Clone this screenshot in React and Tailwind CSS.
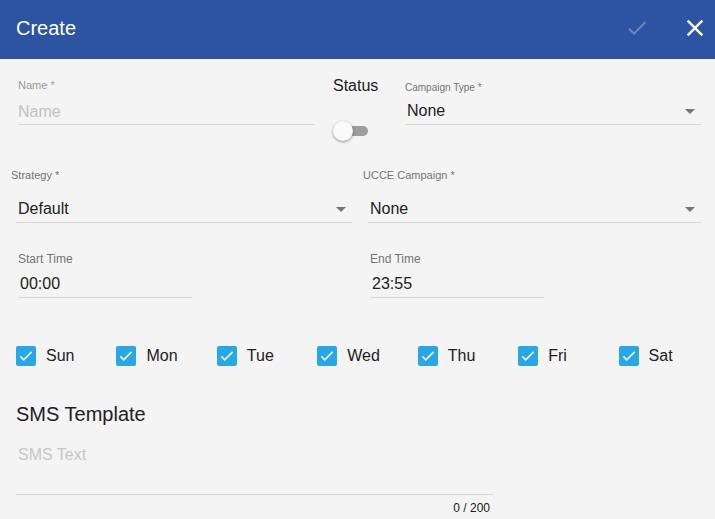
import React from 'react';

const days = ['Sun', 'Mon', 'Tue', 'Wed', 'Thu', 'Fri', 'Sat'];

function Arrow() {
  return <span className="w-0 h-0 border-l-[5px] border-r-[5px] border-t-[5px] border-l-transparent border-r-transparent border-t-[#757575]" />;
}

function SelectField({ label, value, className, labelClass, inputClass }) {
  return (
    <div className={`flex flex-col ${className}`}>
      <div className={`text-[#757575] leading-[13px] ${labelClass}`}>{label}</div>
      <div className={`flex items-center justify-between border-b border-[#d6d6d6] pl-[2px] pr-[6px] ${inputClass}`}>
        <span className="text-[16px] leading-[20px] text-[#212121]">{value}</span>
        <Arrow />
      </div>
    </div>
  );
}

function Day({ name }) {
  return (
    <div className="flex items-center">
      <span className="w-[20px] h-[20px] rounded-[2px] bg-[#27a7e8] flex items-center justify-center">
        <svg width="18" height="18" viewBox="0 0 24 24" fill="none" stroke="#f4f9fd" strokeWidth="2.2">
          <path d="M4.5 12.5l4.5 4.5L19.5 6.5" />
        </svg>
      </span>
      <span className="ml-[10px] text-[16px] leading-[20px] text-[#212121]">{name}</span>
    </div>
  );
}

export default function App() {
  return (
    <div className="w-[715px] h-[519px] overflow-hidden bg-[#f4f4f4]" style={{ fontFamily: '"Liberation Sans", Arial, sans-serif' }}>
      <div className="h-[59px] bg-[#2d53a3] flex items-center pl-[16px] pr-[6px] pb-[4px]">
        <span className="text-white text-[20px] leading-[24px] flex-1">Create</span>
        <svg width="24" height="24" viewBox="0 0 24 24" fill="#6f84bb" className="mr-[32px]">
          <path d="M9 16.17L4.83 12l-1.42 1.41L9 19 21 7l-1.41-1.41z" />
        </svg>
        <svg width="28" height="28" viewBox="0 0 24 24" fill="white">
          <path d="M19 6.41L17.59 5 12 10.59 6.41 5 5 6.41 10.59 12 5 17.59 6.41 19 12 13.41 17.59 19 19 17.59 13.41 12z" />
        </svg>
      </div>

      <div className="flex pl-[18px] pt-[20px]">
        <div className="flex flex-col w-[297px]">
          <div className="text-[11px] leading-[13px] text-[#999]">Name *</div>
          <div className="border-b border-[#d6d6d6] pt-[10px] pb-[2px] text-[16px] leading-[20px] text-[#c2c2c2]">Name</div>
        </div>
        <div className="flex flex-col ml-[18px] w-[72px] -mt-[3px]">
          <div className="text-[16px] leading-[20px] text-[#212121]">Status</div>
          <div className="relative mt-[26px] w-[36px] h-[18px]">
            <span className="absolute left-[10px] top-[4px] w-[25px] h-[10px] rounded-full bg-[#9e9e9e]" />
            <span className="absolute left-0 top-[-1px] w-[20px] h-[20px] rounded-full bg-[#fafafa] shadow-[0_1px_3px_rgba(0,0,0,0.4)]" />
          </div>
        </div>
        <SelectField label="Campaign Type *" value="None" className="w-[296px] pt-[2px]" labelClass="text-[10px]" inputClass="pt-[7px] pb-[3px]" />
      </div>

      <div className="flex pt-[29px]">
        <SelectField label="Strategy *" value="Default" className="w-[336px] ml-[16px]" labelClass="text-[11px] -ml-[5px]" inputClass="pt-[17px] pb-[3px]" />
        <SelectField label="UCCE Campaign *" value="None" className="w-[333px] ml-[16px]" labelClass="text-[11px] -ml-[5px]" inputClass="pt-[17px] pb-[3px]" />
      </div>

      <div className="flex pt-[29px]">
        <div className="flex flex-col w-[174px] ml-[18px]">
          <div className="text-[12px] leading-[14px] text-[#757575]">Start Time</div>
          <div className="border-b border-[#d6d6d6] pl-[2px] pt-[8px] pb-[3px] text-[16px] leading-[20px] text-[#212121]">00:00</div>
        </div>
        <div className="flex flex-col w-[174px] ml-[178px]">
          <div className="text-[12px] leading-[14px] text-[#757575]">End Time</div>
          <div className="border-b border-[#d6d6d6] pl-[2px] pt-[8px] pb-[3px] text-[16px] leading-[20px] text-[#212121]">23:55</div>
        </div>
      </div>

      <div className="grid grid-cols-7 w-[719px] pl-[16px] pt-[48px]">
        {days.map((d) => <Day key={d} name={d} />)}
      </div>

      <div className="pl-[16px] pt-[36px] text-[20px] leading-[24px] text-[#212121]">SMS Template</div>
      <div className="ml-[16px] w-[477px] border-b border-[#d6d6d6] pt-[19px] pb-[29px] pl-[2px] text-[16px] leading-[20px] text-[#c6c6c6]">SMS Text</div>
      <div className="w-[490px] text-right pt-[6px] text-[12px] leading-[14px] text-[#212121]">0 / 200</div>
    </div>
  );
}
